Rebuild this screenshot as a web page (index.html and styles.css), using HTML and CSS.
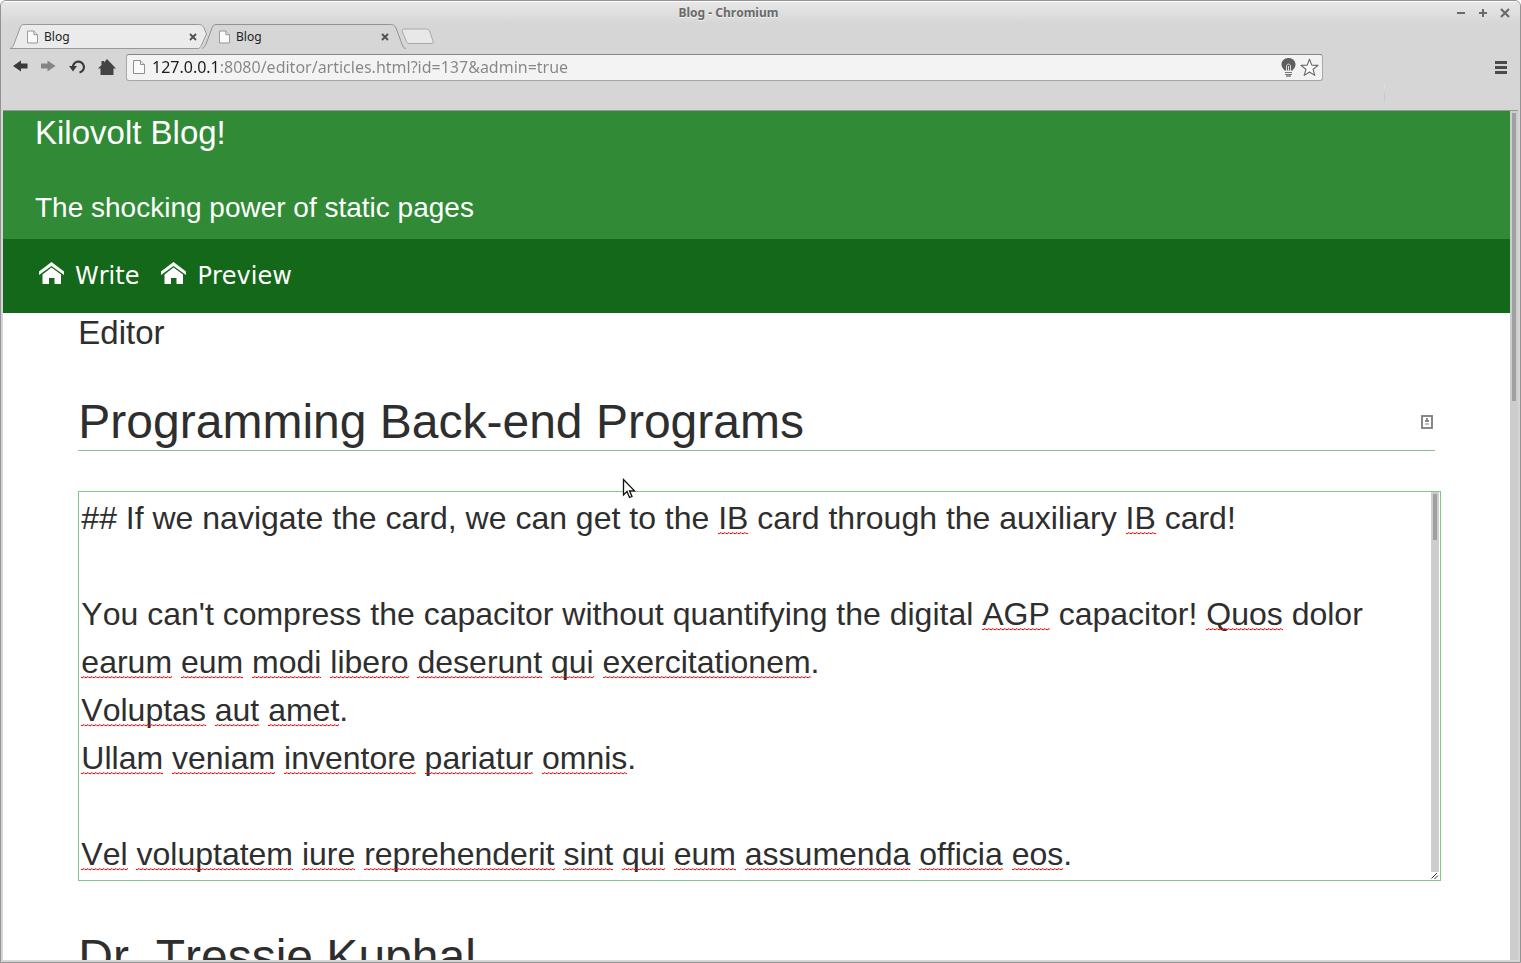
FILE: index.html
```html
<!DOCTYPE html>
<html lang="en">
<head>
<meta charset="utf-8">
<title>Blog</title>
<link rel="stylesheet" href="styles.css">
</head>
<body>
<svg class="defs" aria-hidden="true">
  <symbol id="page" viewBox="0 0 12 14"><path d="M.5.5H7.500L11.500 4.500V13.500H.5Z" fill="#fafafa" stroke="#8f8f8f"/><path d="M7.500.5V4.500H11.500" fill="#e4e4e4" stroke="#8f8f8f"/></symbol>
  <symbol id="cross" viewBox="0 0 8 8"><path d="M1 1 7 7M7 1 1 7" stroke="#505050" stroke-width="1.800" fill="none"/></symbol>
  <symbol id="house" viewBox="0 0 25 22"><path d="M12.500 0 25 9.500V13L12.500 4 0 13V9.500Z"/><path d="M12.500 5.500 22 12.500V22H15.500V16H10V22H3.500V12.500Z"/></symbol>
</svg>
<div class="window">
  <header class="titlebar">
    <span class="window-title">Blog - Chromium</span>
    <div class="window-buttons">
      <button aria-label="Minimize"><svg width="10" height="10"><path d="M1 5H9" stroke="#6a6a6a" stroke-width="2"/></svg></button>
      <button aria-label="Maximize"><svg width="10" height="10"><path d="M1 5H9M5 1V9" stroke="#6a6a6a" stroke-width="2"/></svg></button>
      <button aria-label="Close window"><svg width="10" height="10"><path d="M1 1 9 9M9 1 1 9" stroke="#6a6a6a" stroke-width="2.200"/></svg></button>
    </div>
  </header>
  <div class="tabs">
    <div class="tab">
      <svg class="tab-shape" viewBox="0 0 196 25"><path d="M0 24.500C3 24 3 22 4 20L10 4C11 1 12 .5 15 .5H188C192 .5 193 2 194 4L196.500 10 192 20C190.500 23.500 190 24.500 187 24.500Z" fill="#ebebeb" stroke="#999"/></svg>
      <button class="tab-label"><svg width="11" height="14"><use href="#page"/></svg>Blog</button>
      <button class="tab-close" aria-label="Close tab"><svg width="8" height="8"><use href="#cross"/></svg></button>
    </div>
    <div class="tab">
      <svg class="tab-shape" viewBox="0 0 202 25"><path d="M0 25C2 24 3 22 4 20L10 4C11 1 12 .5 15 .5H188C192 .5 193 2 194 4L200 20C201 22.500 201 24 202 25Z" fill="#d6d6d6"/><path d="M0 24.500C2 24 3 22 4 20L10 4C11 1 12 .5 15 .5H188C192 .5 193 2 194 4L200 20C201 22.500 201 24 204 24.500" fill="none" stroke="#929292"/></svg>
      <button class="tab-label"><svg width="11" height="14"><use href="#page"/></svg>Blog</button>
      <button class="tab-close" aria-label="Close tab"><svg width="8" height="8"><use href="#cross"/></svg></button>
    </div>
    <button class="new-tab" aria-label="New tab"><svg width="33" height="17"><path d="M3 1H25C27 1 28 1.500 28.500 3L32 13C32.500 15 32 15.500 30 15.500H9C7 15.500 6 15 5.500 13.500L1.500 4C1 2 1 1 3 1Z" fill="#e8e8e8" stroke="#a8a8a8"/></svg></button>
  </div>
  <div class="toolbar">
    <div class="nav-buttons">
      <button aria-label="Back"><svg width="15" height="14"><path d="M0 6 8 .5V3.500H14.500V8.500H8V11.500Z" fill="#3a3a3a"/></svg></button>
      <button aria-label="Forward"><svg width="15" height="14"><path d="M14.500 6 6.500.5V3.500H0V8.500H6.500V11.500Z" fill="#858585"/></svg></button>
      <button aria-label="Reload"><svg width="16" height="16"><path d="M4 9A5.500 5.500 0 1 1 10.500 13.500" fill="none" stroke="#3c3c3c" stroke-width="2.200"/><path d="M0 7H8L4 12.500Z" fill="#3c3c3c"/></svg></button>
      <button aria-label="Home"><svg width="18" height="17"><path d="M9 0 18 9.500H15.500V16H2.500V9.500H0L3.500 6V2H6V3.500Z" fill="#444"/></svg></button>
    </div>
    <div class="omnibox">
      <svg width="12" height="16"><use href="#page"/></svg>
      <input class="address" type="text" aria-label="Address" value="127.0.0.1:8080/editor/articles.html?id=137&amp;admin=true" spellcheck="false">
      <button aria-label="Page hint"><svg width="15" height="19"><path d="M7.500 0C12 0 14.500 3 14.500 6.500 14.500 9.500 12.500 11 11.500 12.500H3.500C2.500 11 .5 9.500.5 6.500.5 3 3 0 7.500 0Z" fill="#5e5e5e"/><path d="M5.500 13V8C5.500 5.500 9.500 5.500 9.500 8V13M7.500 8V13" fill="none" stroke="#ddd"/><path d="M4 14.500H11M4 16.500H11" stroke="#777" stroke-width="1.200"/><path d="M5 17.500H10V18.500H5Z" fill="#444"/></svg></button>
      <button aria-label="Bookmark"><svg width="19" height="19"><path d="M9.500 1.300 11.800 7.100 18 7.400 13.100 11.300 14.800 17.400 9.500 14 4.200 17.400 5.900 11.300 1 7.400 7.200 7.100Z" fill="#fafafa" stroke="#666" stroke-width="1.100" stroke-linejoin="round"/></svg></button>
    </div>
    <button class="menu" aria-label="Menu"><svg width="14" height="14"><path d="M1 2.500H13M1 7.500H13M1 12.500H13" stroke="#4a4a4a" stroke-width="3"/></svg></button>
  </div>
  <div class="bookmarks"><span class="divider"></span></div>
  <div class="viewport">
    <div class="page">
      <header class="banner">
        <h1>Kilovolt Blog!</h1>
        <p>The shocking power of static pages</p>
      </header>
      <nav class="site-nav">
        <a href="#write"><svg width="25" height="22"><use href="#house"/></svg>Write</a>
        <a href="#preview"><svg width="25" height="22"><use href="#house"/></svg>Preview</a>
      </nav>
      <main class="editor">
        <h2>Editor</h2>
        <div class="field">
          <input class="heading-input" type="text" aria-label="Title" value="Programming Back-end Programs" spellcheck="false">
          <svg class="contact" width="12" height="14"><rect x="1" y="1" width="10" height="12" fill="#fff" stroke="#7c7c7c" stroke-width="1.800"/><path d="M5 3H7V5H8V7H4V5H5Z" fill="#8a8a8a"/><path d="M4 8H8V10H4Z" fill="#c0c0c0"/></svg>
        </div>
        <div class="body-field">
          <textarea class="body-text" id="body" rows="8" aria-label="Article body" spellcheck="false">## If we navigate the card, we can get to the IB card through the auxiliary IB card!

You can't compress the capacitor without quantifying the digital AGP capacitor! Quos dolor earum eum modi libero deserunt qui exercitationem.
Voluptas aut amet.
Ullam veniam inventore pariatur omnis.

Vel voluptatem iure reprehenderit sint qui eum assumenda officia eos.</textarea>
          <div class="marks" id="marks" aria-hidden="true"></div>
          <div class="body-scroll"><span></span></div>
          <svg class="grip" width="8" height="8" aria-hidden="true"><path d="M.5 6.500 6 1M3.500 7 7 3.500" stroke="#333" fill="none"/></svg>
        </div>
        <div class="field">
          <input class="heading-input" type="text" aria-label="Author" value="Dr. Tressie Kuphal" spellcheck="false">
        </div>
      </main>
    </div>
    <div class="page-scroll"><span></span></div>
  </div>
</div>
<svg class="pointer" width="14" height="21" aria-hidden="true"><path d="M1.500 1.500V17L5 13.500 7.500 19.500 10 18.500 7.500 12.800H12.500Z" fill="#fff" stroke="#111" stroke-width="1.300"/></svg>
<script src="spelling.js"></script>
</body>
</html>
```
FILE: styles.css
```css
* { box-sizing: border-box; }
body {
  margin: 0;
  background: #fff;
  font-family: "Liberation Sans", Arial, sans-serif;
  color: #2e2e2e;
}
h1, h2, p { margin: 0; font-weight: 400; }
button { padding: 0; border: 0; background: none; display: flex; font: inherit; color: inherit; }
input, textarea { outline: 0; }
svg { display: block; flex: none; }
.defs { position: absolute; width: 0; height: 0; }

.window {
  height: 100vh;
  display: flex;
  flex-direction: column;
  overflow: hidden;
  border: 1px solid #939393;
  border-radius: 6px 6px 0 0;
  background: #d6d6d6;
}
.titlebar {
  height: 23px;
  flex: none;
  display: flex;
  align-items: center;
  border-top: 1px solid #fff;
  background: linear-gradient(#e8e8e8, #d6d6d6);
}
.window-title {
  flex: 1;
  text-align: center;
  font: bold 12px/22px "Noto Sans", sans-serif;
  font-kerning: none;
  color: #6a6a6a;
  text-shadow: 0 1px #f4f4f4;
}
.window-buttons { display: flex; gap: 12px; padding: 0 11px 0 0; width: 64px; }

.tabs { height: 25px; flex: none; display: flex; padding-left: 9px; font: 12px/24px "Noto Sans", sans-serif; color: #222; }
.tab { position: relative; width: 196px; display: flex; align-items: center; padding: 0 9px 0 17px; }
.tab + .tab { width: 202px; margin-left: -4px; padding-right: 15px; }
.tab-shape { position: absolute; inset: 0; width: 100%; height: 100%; overflow: visible; }
.tab-label { position: relative; flex: 1; align-items: center; gap: 6px; }
.tab-close { position: relative; }
.new-tab { margin: 4px 0 0 -3px; align-self: flex-start; }

.toolbar { height: 36px; flex: none; display: flex; align-items: center; padding: 0 12px 0 12px; }
.nav-buttons { display: flex; align-items: center; gap: 13px; width: 113px; }
.omnibox {
  flex: 1;
  height: 27px;
  margin-right: 171px;
  display: flex;
  align-items: center;
  gap: 4px;
  padding: 0 3px 0 6px;
  border: 1px solid #a8a8a8;
  border-top-color: #858585;
  border-radius: 3px;
  background: #f3f3f3;
}
.address {
  flex: 1;
  min-width: 0;
  padding: 0 0 0 3px;
  border: 0;
  font: 16px/24px "Noto Sans", sans-serif;
  color: transparent;
  background: linear-gradient(to right, #1c1c1c 68px, #868686 68px);
  background-clip: text;
}
.menu { width: 14px; }

.bookmarks { height: 26px; flex: none; display: flex; justify-content: flex-end; border-bottom: 1px solid #989898; margin: 0 2px; }
.divider { width: 1px; height: 22px; margin-right: 133px; background: linear-gradient(#dce6f0, #b9c9da, #d6d6d6); }

.viewport { flex: 1; min-height: 0; display: flex; margin: 0 2px 2px; background: #fff; }
.page { flex: 1; min-width: 0; overflow: hidden; font-kerning: none; }
.page-scroll { width: 8px; padding: 2px 2px 0; background: #cdcdcd; }
.page-scroll span { display: block; height: 34%; background: #a0a0a0; }

.banner { padding: 0 32px 15px; background: #308a36; color: #fff; }
.banner h1 { font-size: 33px; line-height: 44px; }
.banner p { margin-top: 37px; font-size: 28px; line-height: 32px; }
.site-nav { display: flex; gap: 22px; padding: 20px 36px 20px; background: #14681a; font: 24px/34px "DejaVu Sans", sans-serif; font-kerning: none; }
.site-nav a { display: flex; gap: 11px; color: #fff; text-decoration: none; }
.site-nav svg { fill: #fff; margin-top: 3px; }

.editor { padding: 0 5%; }
.editor h2 { margin-bottom: 42px; font-size: 33px; line-height: 40px; }
.field { display: flex; position: relative; }
.heading-input {
  width: 100%;
  padding: 0 0 2px;
  border: 0;
  border-bottom: 1px solid #86c58a;
  background: none;
  height: 56px;
  font: 48px/53px "Liberation Sans", Arial, sans-serif;
  font-kerning: none;
  color: inherit;
}
.contact { position: absolute; right: 2px; top: 20px; }
.body-field { position: relative; margin: 40px -6px 49px 0; }
.body-text, .marks {
  display: block;
  width: 100%;
  margin: 0;
  padding: 2px 10px 2px 2px;
  border: 1px solid #86c58a;
  font: 32px/48px "Liberation Sans", Arial, sans-serif;
  font-kerning: none;
  white-space: pre-wrap;
  overflow-wrap: break-word;
  overflow: hidden;
}
.body-text { resize: none; background: #fff; color: inherit; }
.marks { position: absolute; inset: 0; border-color: transparent; color: transparent; pointer-events: none; }
.marks mark {
  color: transparent;
  background: url("data:image/svg+xml,%3Csvg xmlns='http://www.w3.org/2000/svg' width='4' height='3'%3E%3Cpath d='M-1 0L1 2L3 .5L5 2.500' fill='none' stroke='%23f00'/%3E%3C/svg%3E") left bottom 1px repeat-x;
}
.body-scroll { position: absolute; top: 1px; right: 2px; bottom: 9px; width: 8px; padding: 2px 2px 0; background: #cdcdcd; }
.body-scroll span { display: block; height: 46px; background: #a0a0a0; }
.grip { position: absolute; right: 2px; bottom: 1px; }
.pointer { position: absolute; left: 622px; top: 478px; pointer-events: none; }
```
FILE: spelling.js
```js
// Underlines the words of the article body that the dictionary does not know.
const known = new Set(
  "if we navigate the card can get to through auxiliary you can't compress capacitor without quantifying digital dolor".split(" ")
);
const body = document.getElementById("body");
const marks = document.getElementById("marks");

function check() {
  marks.replaceChildren();
  for (const part of body.value.split(/([A-Za-z']+)/)) {
    if (/^[A-Za-z]/.test(part) && !known.has(part.toLowerCase())) {
      const mark = document.createElement("mark");
      mark.textContent = part;
      marks.append(mark);
    } else {
      marks.append(part);
    }
  }
}

body.addEventListener("input", check);
check();
```
